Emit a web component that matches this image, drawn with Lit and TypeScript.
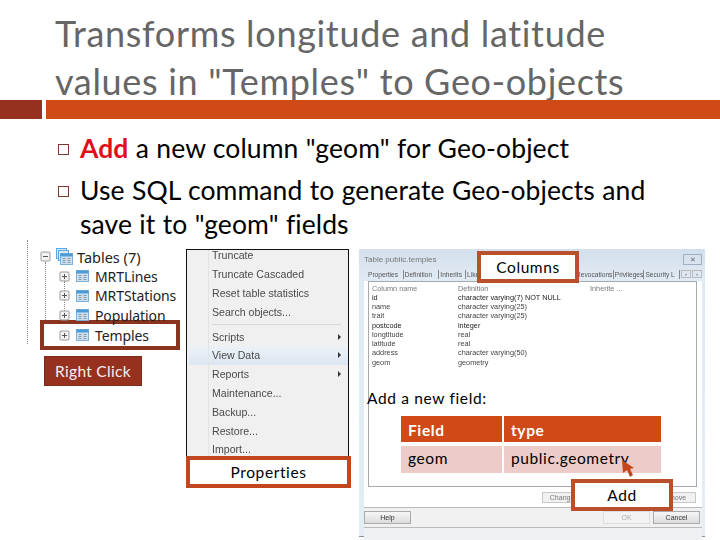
import { LitElement, html, css, svg } from "lit";
import { customElement } from "lit/decorators.js";

const expander = (minus: boolean) => html`<svg class="exp" width="11" height="11" viewBox="0 0 11 11">
  <rect x="1" y="1" width="9" height="9" rx="1" fill="#f2f2f2" stroke="#9a9a9a"/>
  <path d="M3 5.5h5${minus ? "" : "M5.5 3v5"}" stroke="#555" fill="none"/>
</svg>`;

const tableGlyph = svg`
  <rect x="0.5" y="0.5" width="12" height="11" fill="#cfe0ee" stroke="#7fb0d8"/>
  <rect x="0.5" y="0.5" width="12" height="3" fill="#4d9bd8"/>
  <path d="M2.5 5.5h3M7.5 5.5h3M2.5 7.5h3M7.5 7.5h3M2.5 9.5h3M7.5 9.5h3" stroke="#8a9aa5"/>`;

const tableIcon = html`<svg class="ico" width="13" height="12" viewBox="0 0 13 12">${tableGlyph}</svg>`;

const tablesIcon = html`<svg class="ico" width="17" height="17" viewBox="0 0 17 17">
  <rect x="0.5" y="0.5" width="10" height="10" fill="#d8e8f5" stroke="#5fa6de"/>
  <rect x="2.5" y="2.5" width="10" height="10" fill="#d8e8f5" stroke="#5fa6de"/>
  <g transform="translate(4 5)">${tableGlyph}</g>
</svg>`;

const columns: [string, string][] = [
  ["id", "character varying(7) NOT NULL"],
  ["name", "character varying(25)"],
  ["trait", "character varying(25)"],
  ["postcode", "integer"],
  ["longtitude", "real"],
  ["latitude", "real"],
  ["address", "character varying(50)"],
  ["geom", "geometry"],
];

const menuItems: { label: string; arrow?: boolean; hot?: boolean; sep?: boolean }[] = [
  { label: "Truncate" },
  { label: "Truncate Cascaded" },
  { label: "Reset table statistics" },
  { label: "Search objects..." },
  { label: "", sep: true },
  { label: "Scripts", arrow: true },
  { label: "View Data", arrow: true, hot: true },
  { label: "Reports", arrow: true },
  { label: "Maintenance..." },
  { label: "Backup..." },
  { label: "Restore..." },
  { label: "Import..." },
];

const tabs: [string, number][] = [
  ["Properties", 37],
  ["Definition", 36],
  ["Inherits", 27],
  ["Like", 110],
  ["Revocations", 39],
  ["Privileges", 31],
  ["Security L", 36],
];

@customElement("app-root")
export class AppRoot extends LitElement {
  static styles = css`
    :host { display: block; width: 720px; height: 540px; overflow: hidden; background: #fff; font-family: "Lato", "Open Sans", sans-serif; color: #000; }
    .title { margin: 0; height: 100px; padding: 9px 0 0 55px; box-sizing: border-box; font-weight: 400; font-size: 36px; line-height: 48px; color: #666; white-space: nowrap; letter-spacing: 0.68px; }
    .bar { display: flex; gap: 4px; height: 19px; position: relative; }
    .bar .a { width: 42px; background: #96301f; }
    .bar .b { flex: 1; background: #d04a18; }
    .bullets { list-style: none; margin: 0; padding: 12px 0 0 58px; font-size: 26.5px; line-height: 34px; height: 121px; box-sizing: border-box; letter-spacing: 0.1px; word-spacing: 0.4px; }
    .bullets li { display: flex; gap: 11px; margin-bottom: 8px; white-space: nowrap; }
    .sq { flex: none; width: 9px; height: 9px; border: 1.5px solid #7a3a30; margin-top: 13px; }
    .add { color: #e00f1a; font-weight: 700; }

    .stage { position: relative; height: 300px; }
    .shot { position: absolute; }

    .tree { left: 27px; top: 0; width: 150px; height: 104px; border-left: 1px dotted #888; font-family: "Noto Sans", sans-serif; font-size: 14px; color: #222; display: flex; flex-direction: column; padding-left: 12px; box-sizing: border-box; }
    .tree::before, .tree::after { content: ""; position: absolute; border-left: 1px dotted #888; }
    .tree::before { left: 17px; top: 22px; height: 82px; }
    .tree::after { left: 36px; top: 41px; height: 62px; }
    .node { display: flex; align-items: center; height: 19.5px; white-space: nowrap; position: relative; z-index: 1; }
    .node.child { padding-left: 19px; gap: 6px; letter-spacing: -0.1px; }
    .node.root { gap: 5px; margin-top: 7px; font-size: 14.5px; }
    .node.root span { margin-left: -1px; }
    .node .ico, .exp { flex: none; }

    .menu { left: 186px; top: 9px; width: 163px; height: 210px; background: #f0f0f0; border: 1px solid #111; border-bottom: 0; box-sizing: border-box; overflow: hidden; font-family: "Liberation Sans", sans-serif; font-size: 10.6px; color: #4a4a4a; filter: blur(0.35px); }
    .menu-inner { margin-top: -4px; display: flex; flex-direction: column; }
    .gutter { position: absolute; left: 21px; top: 0; bottom: 0; width: 1px; background: #e2e3e3; }
    .mi { height: 18.8px; display: flex; align-items: center; justify-content: space-between; padding: 0 7px 0 25px; }
    .mi.hot { background: linear-gradient(#edf2f8, #dce6f2); margin-left: 2px; padding-left: 23px; }
    .mi.sep { height: 6px; }
    .mi.sep i { display: block; width: 100%; height: 1px; background: #d8d8d8; }
    .arrow { width: 0; height: 0; border-left: 3px solid #333; border-top: 3px solid transparent; border-bottom: 3px solid transparent; }

    .dialog { left: 359px; top: 9px; width: 346px; height: 288px; background: linear-gradient(#d3dfec, #e0eaf4 30px, #e4edf6); border-bottom: 1px solid #8a8f96; box-sizing: border-box; display: flex; flex-direction: column; padding: 0 3px 0 5px; font-family: "Liberation Sans", sans-serif; font-size: 7.3px; color: #444; }
    .d-title { height: 15px; flex: none; display: flex; align-items: center; justify-content: space-between; padding: 3px 0 0 0; color: #777; font-size: 8px; filter: blur(0.4px); }
    .close { width: 17px; height: 9px; border: 1px solid #9fb0c2; font-size: 7px; line-height: 9px; text-align: center; color: #667; }
    .tabs { display: flex; height: 14px; align-items: center; white-space: nowrap; overflow: hidden; filter: blur(0.4px); flex: none; padding-left: 3px; font-size: 6.6px; }
    .tabs span { padding: 1px 0 1px 1px; border-right: 1px solid #888; box-sizing: border-box; color: #555; }
    .tabs .sc { width: 10px; height: 8px; border: 1px solid #bbb; margin-left: 1px; padding: 0; text-align: center; font-size: 6px; line-height: 7px; }
    .d-body { flex: 1; min-height: 0; background: #fff; display: flex; flex-direction: column; }
    .panel { flex: none; height: 206px; margin: 0 5px 0 4px; border: 1px solid #aaa; background: #fff; box-sizing: border-box; }
    .cols { display: grid; grid-template-columns: 86px 132px 1fr; grid-auto-rows: 9.25px; line-height: 9.25px; padding: 1.5px 0 0 3px; filter: blur(0.45px); white-space: nowrap; }
    .cols .h { color: #777; }
    .cols .dark { color: #222; }
    .chg { display: flex; justify-content: space-between; height: 20px; align-items: center; padding: 0 6px 0 178px; filter: blur(0.3px); flex: none; background: #fff; }
    .btn { height: 11px; border: 1px solid #c8c8c8; background: #f1f1f1; display: flex; align-items: center; justify-content: center; color: #777; box-sizing: border-box; font-size: 7px; }
    .chg .btn { width: 46px; }
    .foot { display: flex; justify-content: space-between; height: 19px; align-items: center; padding: 0 2px 0 0; flex: none; border-top: 1px solid #bbb; background: #f1f1f1; filter: blur(0.2px); }
    .foot div { display: flex; gap: 3px; }
    .foot .btn { width: 47px; height: 13px; background: linear-gradient(#f6f6f6, #ddd); border-color: #aaa; color: #333; }
    .foot .btn.off { color: #aaa; background: #f3f3f3; border-color: #ddd; }
    .status { height: 13px; background: #eef0f2; flex: none; border-top: 1px solid #bbb; box-sizing: border-box; }

    .callout { position: absolute; box-sizing: border-box; background: #fff; display: flex; align-items: center; justify-content: center; font-size: 15.5px; color: #000; letter-spacing: 0.6px; white-space: nowrap; }
    .temples { left: 40px; top: 80px; width: 140px; height: 30px; border: 4px solid #8a3420; justify-content: flex-start; padding-left: 15px; gap: 6px; font-family: "Noto Sans", sans-serif; font-size: 14px; letter-spacing: -0.1px; color: #222; }
    .right { left: 44px; top: 116px; width: 98px; height: 30px; background: #96301f; border: 1px solid #7c2a1c; color: #f6f0ee; letter-spacing: 0.3px; }
    .props { left: 186px; top: 216px; width: 165px; height: 32px; border: 4px solid #c4461f; }
    .columns { left: 477px; top: 11px; width: 102px; height: 32px; border: 4px solid #b8502c; }
    .addbtn { left: 571px; top: 239px; width: 102px; height: 32px; border: 4px solid #b8502c; }

    .newf { position: absolute; left: 367px; top: 149px; font-size: 15.5px; letter-spacing: 0.65px; white-space: nowrap; }
    .tbl { position: absolute; left: 401px; top: 176px; display: grid; grid-template-columns: 101px 157px; grid-template-rows: 26px 27px; gap: 4px 2px; font-size: 15.5px; letter-spacing: 0.6px; }
    .tbl div { display: flex; align-items: center; padding-left: 7px; }
    .tbl .th { background: #d04a18; color: #fff; font-weight: 700; padding-top: 1px; }
    .tbl .td { background: #eccbc8; padding-bottom: 4px; }
    .cursor { position: absolute; left: 621px; top: 219px; }
  `;

  render() {
    return html`
      <h1 class="title">Transforms longitude and latitude<br />values in "Temples" to Geo-objects</h1>
      <div class="bar"><div class="a"></div><div class="b"></div></div>
      <ul class="bullets">
        <li><span class="sq"></span><span><span class="add">Add</span> a new column "geom" for Geo-object</span></li>
        <li><span class="sq"></span><span>Use SQL command to generate Geo-objects and<br />save it to "geom" fields</span></li>
      </ul>
      <div class="stage">
        <div class="shot tree">
          <div class="node root">${expander(true)}${tablesIcon}<span>Tables (7)</span></div>
          <div class="node child">${expander(false)}${tableIcon}<span>MRTLines</span></div>
          <div class="node child">${expander(false)}${tableIcon}<span>MRTStations</span></div>
          <div class="node child">${expander(false)}${tableIcon}<span>Population</span></div>
        </div>

        <div class="shot menu">
          <div class="gutter"></div>
          <div class="menu-inner">
            ${menuItems.map((m) =>
              m.sep
                ? html`<div class="mi sep"><i></i></div>`
                : html`<div class="mi ${m.hot ? "hot" : ""}"><span>${m.label}</span>${m.arrow ? html`<span class="arrow"></span>` : ""}</div>`
            )}
          </div>
        </div>

        <div class="shot dialog">
          <div class="d-title"><span>Table public.temples</span><span class="close">✕</span></div>
          <div class="tabs">
            ${tabs.map(([t, w]) => html`<span style="width:${w}px">${t}</span>`)}
            <span class="sc">‹</span><span class="sc">›</span>
          </div>
          <div class="d-body">
            <div class="panel">
              <div class="cols">
                <span class="h">Column name</span><span class="h">Definition</span><span class="h">Inherite ...</span>
                ${columns.map(([n, d], i) => html`<span class=${i === 0 || i === 3 ? "dark" : ""}>${n}</span><span class=${i === 0 || i === 3 ? "dark" : ""}>${d}</span><span></span>`)}
              </div>
            </div>
            <div class="chg"><span class="btn">Change...</span><span class="btn">Remove</span></div>
            <div class="foot">
              <span class="btn">Help</span>
              <div><span class="btn off">OK</span><span class="btn">Cancel</span></div>
            </div>
            <div class="status"></div>
          </div>
        </div>

        <div class="callout temples">${expander(false)}${tableIcon}<span>Temples</span></div>
        <div class="callout right">Right Click</div>
        <div class="callout props">Properties</div>
        <div class="callout columns">Columns</div>

        <div class="newf">Add a new field:</div>
        <div class="tbl">
          <div class="th">Field</div><div class="th">type</div>
          <div class="td">geom</div><div class="td">public.geometry</div>
        </div>
        <svg class="cursor" width="15" height="20" viewBox="0 0 15 20">
          <path d="M1 1l12 8-4 1 3 6-3 2-3-7-4 3z" fill="#c4461f"/>
        </svg>
        <div class="callout addbtn">Add</div>
      </div>
    `;
  }
}
